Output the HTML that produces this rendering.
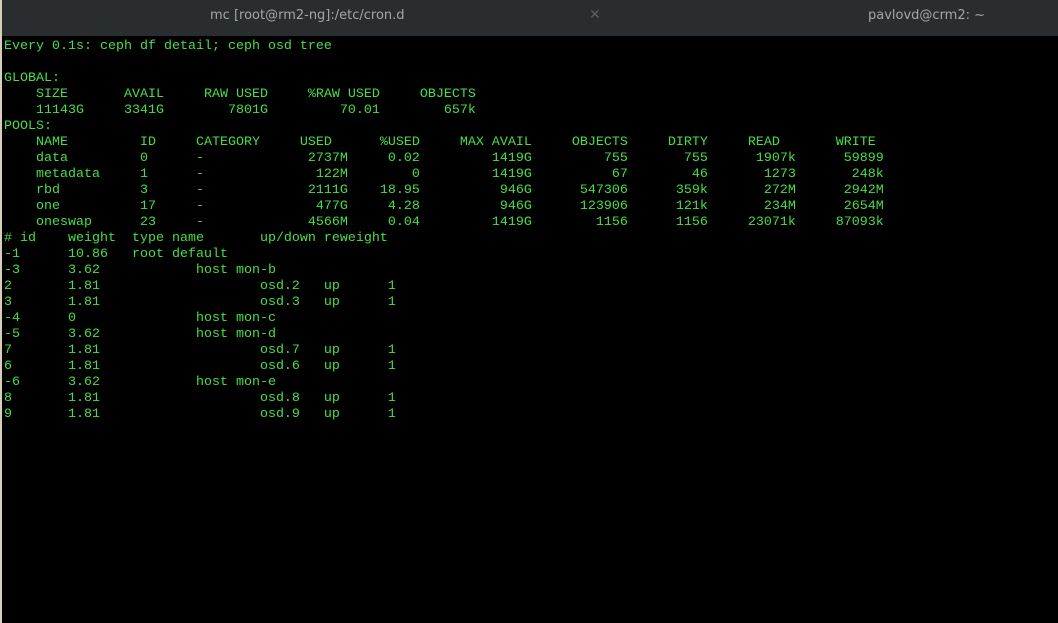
<!DOCTYPE html>
<html><head><meta charset="utf-8"><style>
html,body{margin:0;padding:0;width:1058px;height:623px;overflow:hidden;background:#000;}
.left{position:absolute;left:0;top:0;width:2px;height:623px;background:#d6ceb6;}
.bar{position:absolute;left:2px;top:0;width:1056px;height:36px;background:#2a2d30;font-family:"DejaVu Sans","Liberation Sans",sans-serif;font-size:13px;color:#a3a6a8;}
.t1{position:absolute;left:208px;top:8px;}
.x{position:absolute;left:587px;top:7px;color:#5b5e61;font-size:14px;}
.t2{position:absolute;left:866px;top:8px;}
pre{position:absolute;left:4px;top:39px;margin:0;font-family:"Liberation Mono",monospace;font-size:13.34px;line-height:16px;color:#48de48;}
</style></head><body>
<div class="left"></div>
<div class="bar"><span class="t1">mc [root@rm2-ng]:/etc/cron.d</span><span class="x">✕</span><span class="t2">pavlovd@crm2: ~</span></div>
<pre>Every 0.1s: ceph df detail; ceph osd tree

GLOBAL:
    SIZE       AVAIL     RAW USED     %RAW USED     OBJECTS
    11143G     3341G        7801G         70.01        657k
POOLS:
    NAME         ID     CATEGORY     USED      %USED     MAX AVAIL     OBJECTS     DIRTY     READ       WRITE
    data         0      -             2737M     0.02         1419G         755       755      1907k      59899
    metadata     1      -              122M        0         1419G          67        46       1273       248k
    rbd          3      -             2111G    18.95          946G      547306      359k       272M      2942M
    one          17     -              477G     4.28          946G      123906      121k       234M      2654M
    oneswap      23     -             4566M     0.04         1419G        1156      1156     23071k     87093k
# id    weight  type name       up/down reweight
-1      10.86   root default
-3      3.62            host mon-b
2       1.81                    osd.2   up      1
3       1.81                    osd.3   up      1
-4      0               host mon-c
-5      3.62            host mon-d
7       1.81                    osd.7   up      1
6       1.81                    osd.6   up      1
-6      3.62            host mon-e
8       1.81                    osd.8   up      1
9       1.81                    osd.9   up      1
</pre>
</body></html>
